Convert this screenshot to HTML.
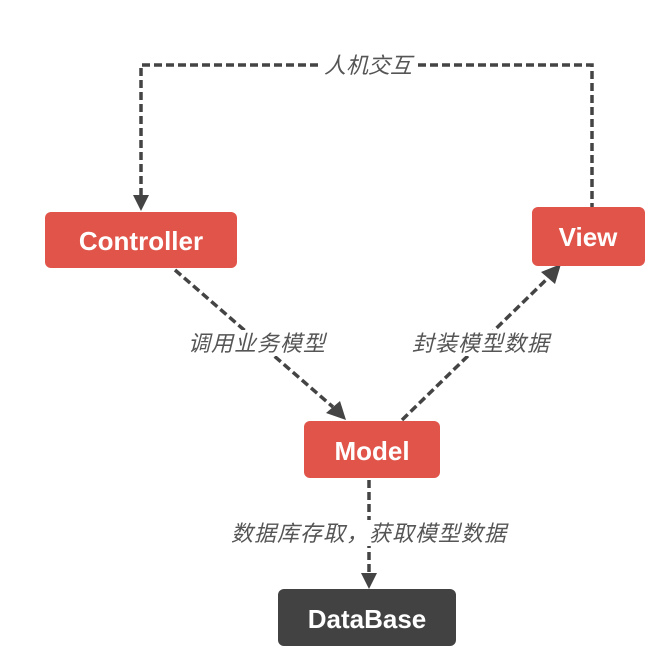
<!DOCTYPE html>
<html><head><meta charset="utf-8"><style>
html,body{margin:0;padding:0;background:#fff;width:665px;height:659px;overflow:hidden}
</style></head><body>
<svg width="665" height="659" xmlns="http://www.w3.org/2000/svg">
<g stroke="#444" stroke-width="3.5" stroke-dasharray="8,4" fill="none">
<path d="M141 196 V65 H318"/>
<path d="M418 65 H592 V207"/>
<path d="M175 270 L333 407"/>
<path d="M402 420 L548 278"/>
<path d="M369 480 V574"/>
</g>
<g fill="#444">
<polygon points="133,195 149,195 141,211"/>
<polygon points="326,413 340,401 346,420"/>
<polygon points="541,272 555,284 561,264"/>
<polygon points="361,573 377,573 369,589"/>
</g>
<g fill="#fff">
<rect x="186" y="330" width="142" height="26"/>
<rect x="409" y="330" width="144" height="26"/>
<rect x="226" y="520" width="286" height="26"/>
</g>
<rect x="45" y="212" width="192" height="56" rx="6" fill="#e0544a"/>
<rect x="532" y="207" width="113" height="59" rx="6" fill="#e0544a"/>
<rect x="304" y="421" width="136" height="57" rx="6" fill="#e0544a"/>
<rect x="278" y="589" width="178" height="57" rx="6" fill="#424242"/>
<g font-family="'Liberation Sans',sans-serif" font-weight="bold" font-size="26" fill="#fff" text-anchor="middle">
<text x="141" y="250">Controller</text>
<text x="588" y="246">View</text>
<text x="372" y="460">Model</text>
<text x="367" y="628">DataBase</text>
</g>
<g font-family="'Liberation Sans','Noto Sans CJK SC',sans-serif" font-style="italic" font-size="22" fill="#555" text-anchor="middle">
<text x="368" y="73">人机交互</text>
<text x="257" y="351" letter-spacing="1">调用业务模型</text>
<text x="481" y="351" letter-spacing="1">封装模型数据</text>
<text x="369" y="541" letter-spacing="1">数据库存取，获取模型数据</text>
</g>
</svg>
</body></html>
